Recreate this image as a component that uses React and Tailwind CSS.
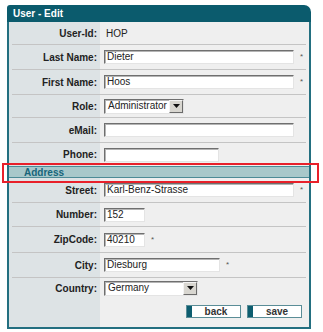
import React from 'react';

const FONT = { fontFamily: '"Liberation Sans", Arial, sans-serif' };

function TextBox({ value = '', width }) {
  return (
    <div
      className={`${width} h-[14px] bg-white border border-t-[#6f6f6f] border-l-[#6f6f6f] border-b-[#e4e4e4] border-r-[#e4e4e4] shadow-[inset_1px_1px_0_#b4b4b4] text-[10px] leading-[12px] pl-[2px] text-[#222] overflow-hidden whitespace-nowrap`}
    >
      {value}
    </div>
  );
}

function SelectBox({ value, width }) {
  return (
    <div
      className={`${width} h-[15px] bg-white border border-t-[#6f6f6f] border-l-[#6f6f6f] border-b-[#e4e4e4] border-r-[#e4e4e4] shadow-[inset_1px_1px_0_#b4b4b4] flex items-center`}
    >
      <span className="flex-1 text-[10px] leading-[12px] pl-[3px] text-[#222] whitespace-nowrap overflow-hidden">{value}</span>
      <span className="w-[14px] h-[13px] bg-[#d8d6d0] border border-t-[#f4f4f4] border-l-[#f4f4f4] border-b-[#6a6a6a] border-r-[#6a6a6a] flex items-center justify-center">
        <svg width="7" height="4" viewBox="0 0 7 4"><path d="M0 0h7L3.5 4z" fill="#111" /></svg>
      </span>
    </div>
  );
}

function Star() {
  return <span className="text-[8px] text-[#555] ml-[6px] leading-none">*</span>;
}

function Row({ label, h, line = true, children }) {
  return (
    <div className={`mx-[3px] flex items-center ${h} ${line ? 'border-b border-[#c4c4c4]' : ''}`}>
      <div className="w-[88px] text-right pr-[3px] text-[10px] font-bold text-[#222]">{label}</div>
      <div className="flex items-center pl-[4px] flex-1">{children}</div>
    </div>
  );
}

function Button({ label }) {
  return (
    <div className="w-[55px] h-[13px] flex border border-[#5a8d97] bg-white">
      <span className="w-[5px] bg-[#0d5d6f]" />
      <span className="flex-1 text-center text-[10px] font-bold leading-[11px] text-[#333]">{label}</span>
    </div>
  );
}

export default function App() {
  return (
    <div className="w-[323px] h-[332px] bg-white relative" style={FONT}>
      <div className="ml-[7px] pt-[5px] w-[304px]">
        <div className="h-[17px] bg-[#0b5b6d] rounded-tl-[3px] rounded-tr-[7px] flex items-center pl-[6px]">
          <span className="text-white text-[10px] font-bold">User - Edit</span>
        </div>
        <div className="border-x-2 border-b-2 border-[#236f80] bg-[linear-gradient(to_right,#dde3e5_91px,#efefef_91px)]">
          <Row label="User-Id:" h="h-[23px]">
            <span className="text-[10px] text-[#222] pl-[2px]">HOP</span>
          </Row>
          <Row label="Last Name:" h="h-[25px]">
            <TextBox value="Dieter" width="w-[190px]" />
            <Star />
          </Row>
          <Row label="First Name:" h="h-[25px]">
            <TextBox value="Hoos" width="w-[190px]" />
            <Star />
          </Row>
          <Row label="Role:" h="h-[23px]">
            <SelectBox value="Administrator" width="w-[80px]" />
          </Row>
          <Row label="eMail:" h="h-[25px]">
            <TextBox width="w-[190px]" />
          </Row>
          <Row label="Phone:" h="h-[23px]" line={false}>
            <TextBox width="w-[115px]" />
          </Row>
          <div className="h-[12px] bg-[#a8c8ca] border-y border-[#4c8b96] flex items-center pl-[15px]">
            <span className="text-[10px] font-bold text-[#17657a]">Address</span>
          </div>
          <Row label="Street:" h="h-[25px]">
            <TextBox value="Karl-Benz-Strasse" width="w-[190px]" />
            <Star />
          </Row>
          <Row label="Number:" h="h-[24px]">
            <TextBox value="152" width="w-[41px]" />
          </Row>
          <Row label="ZipCode:" h="h-[26px]">
            <TextBox value="40210" width="w-[41px]" />
            <Star />
          </Row>
          <Row label="City:" h="h-[25px]">
            <TextBox value="Diesburg" width="w-[116px]" />
            <Star />
          </Row>
          <Row label="Country:" h="h-[20px]" line={false}>
            <SelectBox value="Germany" width="w-[94px]" />
          </Row>
          <div className="flex justify-end gap-[6px] pr-[7px] pt-[7px] pb-[9px]">
            <Button label="back" />
            <Button label="save" />
          </div>
        </div>
      </div>
      <div className="absolute left-[2px] top-[163px] w-[317px] h-[20px] border-2 border-[#e8202a]" />
    </div>
  );
}
